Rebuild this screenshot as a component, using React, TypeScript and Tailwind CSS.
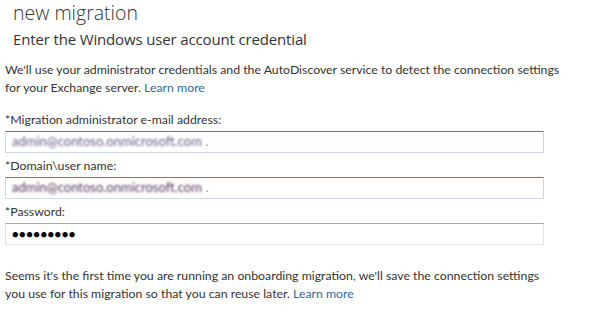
import React from "react";

const font = { fontFamily: 'Lato, "Open Sans", sans-serif' };

export default function App() {
  return (
    <div className="w-[599px] h-[313px] bg-white text-[#333333] overflow-hidden" style={font}>
      <div className="pl-[13px]">
        <div className="text-[19.5px] leading-[26px] font-light text-[#333]" style={{ fontFamily: '"Open Sans", sans-serif' }}>new migration</div>
        <div className="text-[15px] leading-[20px] mt-[3px] text-[#333]" style={{ fontFamily: '"Open Sans", sans-serif', letterSpacing: "-0.15px" }}>Enter the Windows user account credential</div>
      </div>
      <div className="pl-[5px] mt-[12px]">
        <p className="text-[12.3px] leading-[18px]">
          We'll use your administrator credentials and the AutoDiscover service to detect the connection settings
          <br />
          for your Exchange server. <span className="text-[#2f6aa0]">Learn more</span>
        </p>
        <div className="w-[539px] mt-[14px] flex flex-col">
          <label className="text-[12.3px] leading-[18px]">*Migration administrator e-mail address:</label>
          <div className="mt-[2px] h-[22px] border border-[#c7d9ea] border-t-[#4a7fb3] flex items-center px-[6px]">
            <span className="text-[13px] text-[#6a5a8a] blur-[1.2px]">admin@contoso.onmicrosoft.com</span>
            <span className="text-[12px] text-[#888] ml-[4px]">.</span>
          </div>
          <label className="text-[12.3px] leading-[18px] mt-[4px]">*Domain\user name:</label>
          <div className="mt-[2px] h-[22px] border border-[#c7d9ea] border-t-[#4a7fb3] flex items-center px-[6px]">
            <span className="text-[13px] text-[#553355] blur-[1.2px]">admin@contoso.onmicrosoft.com</span>
            <span className="text-[12px] text-[#888] ml-[4px]">.</span>
          </div>
          <label className="text-[12.3px] leading-[18px] mt-[4px]">*Password:</label>
          <div className="mt-[2px] h-[22px] border border-[#e2e2e2] border-t-[#a8a8a8] flex items-center px-[6px]">
            <span className="text-[11px] tracking-[0.5px] text-black">●●●●●●●●●</span>
          </div>
        </div>
        <p className="text-[12.3px] leading-[18px] mt-[22px]">
          Seems it's the first time you are running an onboarding migration, we'll save the connection settings
          <br />
          you use for this migration so that you can reuse later. <span className="text-[#2f6aa0]">Learn more</span>
        </p>
      </div>
    </div>
  );
}
